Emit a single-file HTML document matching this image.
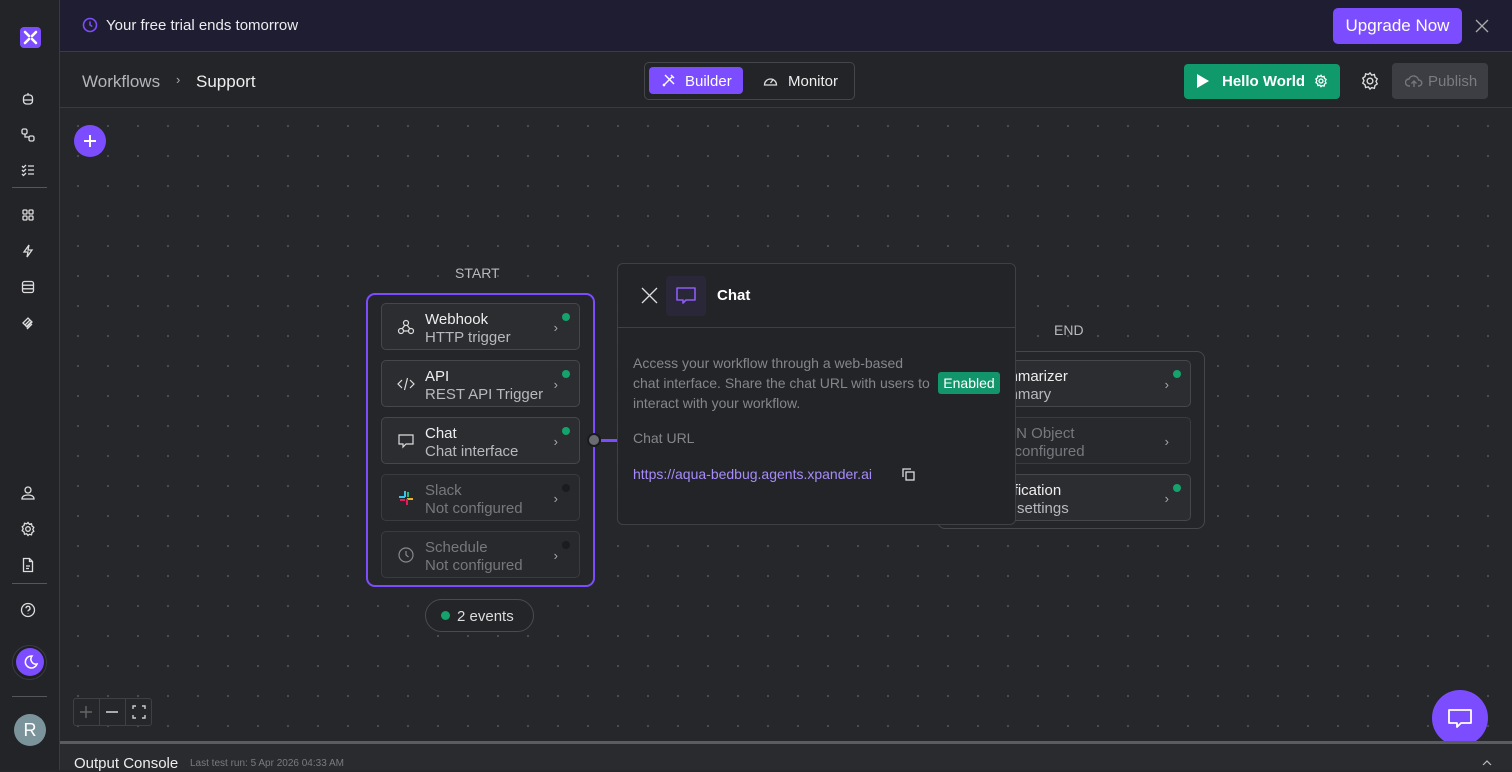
<!DOCTYPE html>
<html><head><meta charset="utf-8"><style>
*{box-sizing:border-box;margin:0;padding:0}
body{width:1512px;height:770px;overflow:hidden;background:#26272b;font-family:"Liberation Sans",sans-serif;color:#e6e6e8;position:relative}
.abs{position:absolute}
svg{display:block}
.side{left:0;top:0;width:60px;height:770px;background:#232428;border-right:1px solid #3a3b40}
.banner{left:60px;top:0;width:1452px;height:52px;background:#1f1d31;border-bottom:1px solid #3a3a48}
.hdr{left:60px;top:52px;width:1452px;height:56px;background:#242529;border-bottom:1px solid #3a3b40}
.canvas{left:61px;top:109px;width:1451px;height:633px;background-color:#26272b;background-image:radial-gradient(circle,#4c4d52 1px,transparent 1.3px);background-size:30px 30px;background-position:2px 2px}
.item{position:absolute;left:13px;width:199px;height:47px;background:#2c2d31;border:1px solid #46474c;border-radius:5px}
.item .t{position:absolute;left:43px;top:7px;font-size:15px;color:#eee}
.item .s{position:absolute;left:43px;top:25px;font-size:15px;color:#b8b9be}
.item.off{background:#28292d;border-color:#3a3b40}
.item.off .t,.item.off .s{color:#77787d}
.item .ic{position:absolute;left:15px;top:14px}
.item .ch{position:absolute;right:21px;top:16px;color:#aaa;font-size:13px}
.item .dot{position:absolute;right:9px;top:9px;width:8px;height:8px;border-radius:50%;background:#13a36b}
.item.off .dot{background:#1b1c1f}
.sic{position:absolute;left:20px}
</style></head><body>

<div class="abs side">
 <div class="abs" style="left:20px;top:27px;width:21px;height:21px;background:#7c4dff;border-radius:4px">
  <svg width="21" height="21" viewBox="0 0 21 21"><path d="M5 5l4 4M16 5l-4 4M5 16l4-4M16 16l-4-4" stroke="#fff" stroke-width="2.6" stroke-linecap="round"/></svg></div>
 <svg class="sic" style="top:91px" width="16" height="16" viewBox="0 0 16 16" fill="none" stroke="#ddd" stroke-width="1.3"><rect x="3.5" y="4" width="9" height="9" rx="3"/><path d="M3.5 9h9M8 2v2"/></svg>
 <svg class="sic" style="top:127px" width="16" height="16" viewBox="0 0 16 16" fill="none" stroke="#ddd" stroke-width="1.3"><rect x="2" y="2" width="5" height="5" rx="1.5"/><rect x="9" y="9" width="5" height="5" rx="1.5"/><path d="M5 7v3h4"/></svg>
 <svg class="sic" style="top:162px" width="16" height="16" viewBox="0 0 16 16" fill="none" stroke="#ddd" stroke-width="1.3"><path d="M2 4l1.5 1.5L6 3M2 8l1.5 1.5L6 7M2 12l1.5 1.5L6 11M8 4h6M8 8h6M8 12h6"/></svg>
 <div class="abs" style="left:12px;top:187px;width:35px;height:1px;background:#55565c"></div>
 <svg class="sic" style="top:207px" width="16" height="16" viewBox="0 0 16 16" fill="none" stroke="#ddd" stroke-width="1.3"><rect x="3" y="3" width="4" height="4" rx="1"/><rect x="9" y="3" width="4" height="4" rx="1"/><rect x="3" y="9" width="4" height="4" rx="1"/><rect x="9" y="9" width="4" height="4" rx="1"/></svg>
 <svg class="sic" style="top:243px" width="16" height="16" viewBox="0 0 16 16" fill="none" stroke="#ddd" stroke-width="1.3"><path d="M9 2L4 9h4l-1 5 5-7H8z"/></svg>
 <svg class="sic" style="top:279px" width="16" height="16" viewBox="0 0 16 16" fill="none" stroke="#ddd" stroke-width="1.3"><rect x="2.5" y="2.5" width="11" height="11" rx="2"/><path d="M2.5 6.2h11M2.5 9.8h11"/></svg>
 <svg class="sic" style="top:315px" width="16" height="16" viewBox="0 0 16 16" fill="none" stroke="#ddd" stroke-width="1.3"><path d="M3 8l5-5 4 4-5 5zM5 10l5-5M6 12l5-5M7 14l5-5"/></svg>
 <svg class="sic" style="top:485px" width="16" height="16" viewBox="0 0 16 16" fill="none" stroke="#ddd" stroke-width="1.3"><circle cx="8" cy="5" r="3"/><path d="M2 14c0-3 3-4 6-4s6 1 6 4z"/></svg>
 <svg class="sic" style="top:521px" width="16" height="16" viewBox="0 0 16 16" fill="none" stroke="#ddd" stroke-width="1.3"><circle cx="8" cy="8" r="2.3"/><path d="M8 1.5l1.3 1.8 2.2-.5.5 2.2 1.8 1.3-1 2 1 2-1.8 1.3-.5 2.2-2.2-.5L8 14.5l-1.3-1.8-2.2.5-.5-2.2L2.2 9.7l1-2-1-2L4 4.5l.5-2.2 2.2.5z"/></svg>
 <svg class="sic" style="top:557px" width="16" height="16" viewBox="0 0 16 16" fill="none" stroke="#ddd" stroke-width="1.3"><path d="M3.5 1.5h6l3 3v10h-9z M9.5 1.5v3h3M6 9h4M6 11.5h3"/></svg>
 <div class="abs" style="left:12px;top:583px;width:35px;height:1px;background:#55565c"></div>
 <svg class="sic" style="top:602px" width="16" height="16" viewBox="0 0 16 16" fill="none" stroke="#ddd" stroke-width="1.3"><circle cx="8" cy="8" r="6.5"/><path d="M6 6.3a2 2 0 1 1 2.6 1.9c-.5.2-.6.6-.6 1.2M8 11.2v.4"/></svg>
 <div class="abs" style="left:12px;top:645px;width:35px;height:35px;border-radius:50%;border:1px solid #3a3b40;background:#1f2023"></div>
 <div class="abs" style="left:16px;top:648px;width:28px;height:28px;border-radius:50%;background:#7c4dff"><svg width="28" height="28" viewBox="0 0 28 28" fill="none" stroke="#fff" stroke-width="1.5"><path d="M16 8a6 6 0 1 0 5 8 5 5 0 0 1-5-8z"/></svg></div>
 <div class="abs" style="left:12px;top:696px;width:35px;height:1px;background:#55565c"></div>
 <div class="abs" style="left:14px;top:714px;width:32px;height:32px;border-radius:50%;background:#7b949c;color:#fff;font-size:18px;text-align:center;line-height:32px">R</div>
</div>

<div class="abs banner">
 <svg class="abs" style="left:22px;top:17px" width="16" height="16" viewBox="0 0 16 16" fill="none" stroke="#7c4dff" stroke-width="1.6"><circle cx="8" cy="8" r="6.5"/><path d="M8 4.5V8l2.3 1.5"/></svg>
 <div class="abs" style="left:46px;top:17px;font-size:15px;color:#ececf0">Your free trial ends tomorrow</div>
 <div class="abs" style="left:1273px;top:8px;width:129px;height:36px;background:#7c4dff;border-radius:5px;color:#fff;font-size:17px;text-align:center;line-height:36px">Upgrade Now</div>
 <svg class="abs" style="left:1414px;top:18px" width="16" height="16" viewBox="0 0 16 16" stroke="#aaa" stroke-width="1.3"><path d="M2 2l12 12M14 2L2 14"/></svg>
</div>

<div class="abs hdr">
 <div class="abs" style="left:22px;top:20px;font-size:17px;color:#b4b5ba">Workflows</div>
 <div class="abs" style="left:116px;top:20px;font-size:13px;color:#aaa">›</div>
 <div class="abs" style="left:136px;top:20px;font-size:17px;color:#eee">Support</div>
 <div class="abs" style="left:584px;top:10px;width:211px;height:38px;border:1px solid #45464b;border-radius:5px;background:#232428"></div>
 <div class="abs" style="left:589px;top:15px;width:94px;height:27px;background:#7c4dff;border-radius:4px"></div>
 <svg class="abs" style="left:601px;top:21px" width="15" height="15" viewBox="0 0 15 15" fill="none" stroke="#fff" stroke-width="1.4"><path d="M2 13L11 4M4 2l9 9M10 2l3 3M2 11l2 2"/></svg>
 <div class="abs" style="left:625px;top:21px;font-size:15px;color:#fff">Builder</div>
 <svg class="abs" style="left:703px;top:21px" width="15" height="15" viewBox="0 0 15 15" fill="none" stroke="#ddd" stroke-width="1.3"><path d="M1.5 12a6 6 0 1 1 12 0z"/><path d="M7.5 10l3-4"/></svg>
 <div class="abs" style="left:728px;top:21px;font-size:15px;color:#eee">Monitor</div>
 <div class="abs" style="left:1124px;top:12px;width:156px;height:35px;background:#109a6b;border-radius:4px"></div>
 <svg class="abs" style="left:1136px;top:21px" width="14" height="16" viewBox="0 0 14 16"><path d="M1 1l12 7-12 7z" fill="#fff"/></svg>
 <div class="abs" style="left:1162px;top:21px;font-size:15px;color:#fff;font-weight:bold">Hello World</div>
 <svg class="abs" style="left:1254px;top:22px" width="14" height="14" viewBox="0 0 16 16" fill="none" stroke="#fff" stroke-width="1.5"><circle cx="8" cy="8" r="2.3"/><path d="M8 1.5l1.3 1.8 2.2-.5.5 2.2 1.8 1.3-1 2 1 2-1.8 1.3-.5 2.2-2.2-.5L8 14.5l-1.3-1.8-2.2.5-.5-2.2L2.2 9.7l1-2-1-2L4 4.5l.5-2.2 2.2.5z"/></svg>
 <svg class="abs" style="left:1300px;top:19px" width="20" height="20" viewBox="0 0 16 16" fill="none" stroke="#ddd" stroke-width="1.1"><circle cx="8" cy="8" r="2.3"/><path d="M8 1.5l1.3 1.8 2.2-.5.5 2.2 1.8 1.3-1 2 1 2-1.8 1.3-.5 2.2-2.2-.5L8 14.5l-1.3-1.8-2.2.5-.5-2.2L2.2 9.7l1-2-1-2L4 4.5l.5-2.2 2.2.5z"/></svg>
 <div class="abs" style="left:1332px;top:11px;width:96px;height:36px;background:#3d3e44;border-radius:4px"></div>
 <svg class="abs" style="left:1345px;top:21px" width="18" height="16" viewBox="0 0 18 16" fill="none" stroke="#75767b" stroke-width="1.4"><path d="M5 13H4a3.5 3.5 0 0 1 0-7 5 5 0 0 1 9.5 1A3 3 0 0 1 14 13h-1M9 14V8M6.5 10.5L9 8l2.5 2.5"/></svg>
 <div class="abs" style="left:1368px;top:21px;font-size:15px;color:#7a7b80">Publish</div>
</div>

<div class="abs canvas"></div>

<div class="abs" style="left:74px;top:125px;width:32px;height:32px;border-radius:50%;background:#7c4dff"><svg width="32" height="32" viewBox="0 0 32 32" stroke="#fff" stroke-width="2"><path d="M16 10v12M10 16h12"/></svg></div>

<div class="abs" style="left:455px;top:265px;font-size:14px;color:#b8b9be">START</div>
<div class="abs" style="left:366px;top:293px;width:229px;height:294px;border:2px solid #7c4dff;border-radius:9px;background:#252629">
 <div class="item" style="top:8px"><svg class="ic" width="18" height="18" viewBox="0 0 18 18" fill="none" stroke="#ddd" stroke-width="1.2"><circle cx="9" cy="5" r="2.5"/><circle cx="4" cy="13" r="2.5"/><circle cx="14" cy="13" r="2.5"/><path d="M8 7l-3 4M10 7l3 4M6.5 13h5"/></svg><div class="t">Webhook</div><div class="s">HTTP trigger</div><div class="ch">›</div><div class="dot"></div></div>
 <div class="item" style="top:65px"><svg class="ic" width="18" height="18" viewBox="0 0 18 18" fill="none" stroke="#ddd" stroke-width="1.2"><path d="M5 5L1 9l4 4M13 5l4 4-4 4M10.5 3l-3 12"/></svg><div class="t">API</div><div class="s">REST API Trigger</div><div class="ch">›</div><div class="dot"></div></div>
 <div class="item" style="top:122px"><svg class="ic" width="18" height="18" viewBox="0 0 18 18" fill="none" stroke="#ddd" stroke-width="1.2"><path d="M2 3h14v9H9l-3 3v-3H2z"/></svg><div class="t">Chat</div><div class="s">Chat interface</div><div class="ch">›</div><div class="dot"></div></div>
 <div class="item off" style="top:179px"><svg class="ic" width="18" height="18" viewBox="0 0 18 18"><rect x="7" y="2" width="2" height="6" fill="#36c5f0"/><rect x="2" y="7" width="6" height="2" fill="#36c5f0"/><rect x="10" y="9" width="6" height="2" fill="#ecb22e"/><rect x="9" y="10" width="2" height="6" fill="#e01e5a"/><rect x="10" y="3" width="2" height="5" fill="#2eb67d"/><rect x="3" y="10" width="5" height="2" fill="#e01e5a"/></svg><div class="t">Slack</div><div class="s">Not configured</div><div class="ch">›</div><div class="dot"></div></div>
 <div class="item off" style="top:236px"><svg class="ic" width="18" height="18" viewBox="0 0 18 18" fill="none" stroke="#888" stroke-width="1.2"><circle cx="9" cy="9" r="7"/><path d="M9 5v4l2.5 2"/></svg><div class="t">Schedule</div><div class="s">Not configured</div><div class="ch">›</div><div class="dot"></div></div>
</div>
<div class="abs" style="left:587px;top:433px;width:14px;height:14px;border-radius:50%;background:#6b6c72;border:2px solid #1a1b1e"></div>
<div class="abs" style="left:601px;top:439px;width:17px;height:3px;background:#7c4dff"></div>
<div class="abs" style="left:425px;top:599px;width:109px;height:33px;border:1px solid #4a4b50;border-radius:17px;background:#242529"></div>
<div class="abs" style="left:441px;top:611px;width:9px;height:9px;border-radius:50%;background:#13a36b"></div>
<div class="abs" style="left:457px;top:608px;font-size:15px;color:#ddd">2 events</div>

<div class="abs" style="left:1054px;top:322px;font-size:14px;color:#b8b9be">END</div>
<div class="abs" style="left:937px;top:351px;width:268px;height:178px;border:1px solid #46474c;border-radius:8px;background:#252629">
 <div class="item" style="top:8px;left:13px;width:240px"><div class="t" style="left:35px">Summarizer</div><div class="s" style="left:35px">Summary</div><div class="ch">›</div><div class="dot"></div></div>
 <div class="item off" style="top:65px;left:13px;width:240px"><div class="t" style="left:35px">JSON Object</div><div class="s" style="left:35px">Not configured</div><div class="ch">›</div></div>
 <div class="item" style="top:122px;left:13px;width:240px"><div class="t" style="left:35px">Notification</div><div class="s" style="left:35px">Edit settings</div><div class="ch">›</div><div class="dot"></div></div>
</div>

<div class="abs" style="left:617px;top:263px;width:399px;height:262px;background:#232428;border:1px solid #3f4045;border-radius:6px">
 <svg class="abs" style="left:23px;top:23px" width="17" height="17" viewBox="0 0 17 17" stroke="#ddd" stroke-width="1.3"><path d="M1 1l15 15M16 1L1 16"/></svg>
 <div class="abs" style="left:48px;top:12px;width:40px;height:40px;border-radius:4px;background:#2a2738"></div>
 <svg class="abs" style="left:57px;top:22px" width="22" height="20" viewBox="0 0 22 20" fill="none" stroke="#8b5cf6" stroke-width="1.6"><path d="M2 2h18v12h-9l-3 3v-3H2z" stroke-linejoin="round"/></svg>
 <div class="abs" style="left:99px;top:23px;font-size:15px;color:#fff;font-weight:bold">Chat</div>
 <div class="abs" style="left:0;top:63px;width:397px;height:1px;background:#3f4045"></div>
 <div class="abs" style="left:15px;top:89px;width:298px;font-size:14px;line-height:20px;color:#85868b">Access your workflow through a web-based chat interface. Share the chat URL with users to interact with your workflow.</div>
 <div class="abs" style="left:320px;top:108px;width:62px;height:22px;background:#12956a;border-radius:3px;color:#fff;font-size:14px;line-height:22px;text-align:center">Enabled</div>
 <div class="abs" style="left:15px;top:166px;font-size:14px;color:#85868b">Chat URL</div>
 <div class="abs" style="left:15px;top:202px;font-size:14px;color:#a78bfa">https://aqua-bedbug.agents.xpander.ai</div>
 <svg class="abs" style="left:284px;top:204px" width="13" height="13" viewBox="0 0 13 13" fill="none" stroke="#ddd" stroke-width="1.3"><rect x="4" y="4" width="8" height="8"/><path d="M1 9V1h8"/></svg>
</div>

<div class="abs" style="left:73px;top:698px;width:79px;height:28px;border:1px solid #3f4045;border-radius:3px;background:#26272b"></div>
<div class="abs" style="left:99px;top:698px;width:1px;height:28px;background:#3f4045"></div>
<div class="abs" style="left:125px;top:698px;width:1px;height:28px;background:#3f4045"></div>
<svg class="abs" style="left:79px;top:705px" width="14" height="14" stroke="#666" stroke-width="1.4"><path d="M7 1v12M1 7h12"/></svg>
<svg class="abs" style="left:105px;top:705px" width="14" height="14" stroke="#ccc" stroke-width="1.6"><path d="M1 7h12"/></svg>
<svg class="abs" style="left:132px;top:705px" width="14" height="14" fill="none" stroke="#ccc" stroke-width="1.4"><path d="M1 4V1h3M10 1h3v3M13 10v3h-3M4 13H1v-3"/></svg>

<div class="abs" style="left:1432px;top:690px;width:56px;height:56px;border-radius:50%;background:#7c4dff"><svg width="56" height="56" viewBox="0 0 56 56" fill="none" stroke="#fff" stroke-width="1.8"><path d="M17 20h22v13H29l-4 4v-4h-8z" stroke-linejoin="round"/></svg></div>

<div class="abs" style="left:60px;top:741px;width:1452px;height:3px;background:#5b5c62"></div>
<div class="abs" style="left:60px;top:744px;width:1452px;height:26px;background:#2a2b2f"></div>
<div class="abs" style="left:74px;top:755px;font-size:15px;color:#eee">Output Console</div>
<div class="abs" style="left:190px;top:758px;font-size:10px;color:#7a7b80">Last test run: 5 Apr 2026 04:33 AM</div>
<svg class="abs" style="left:1482px;top:760px" width="10" height="6" fill="none" stroke="#bbb" stroke-width="1.2"><path d="M1 5l4-4 4 4"/></svg>
</body></html>
